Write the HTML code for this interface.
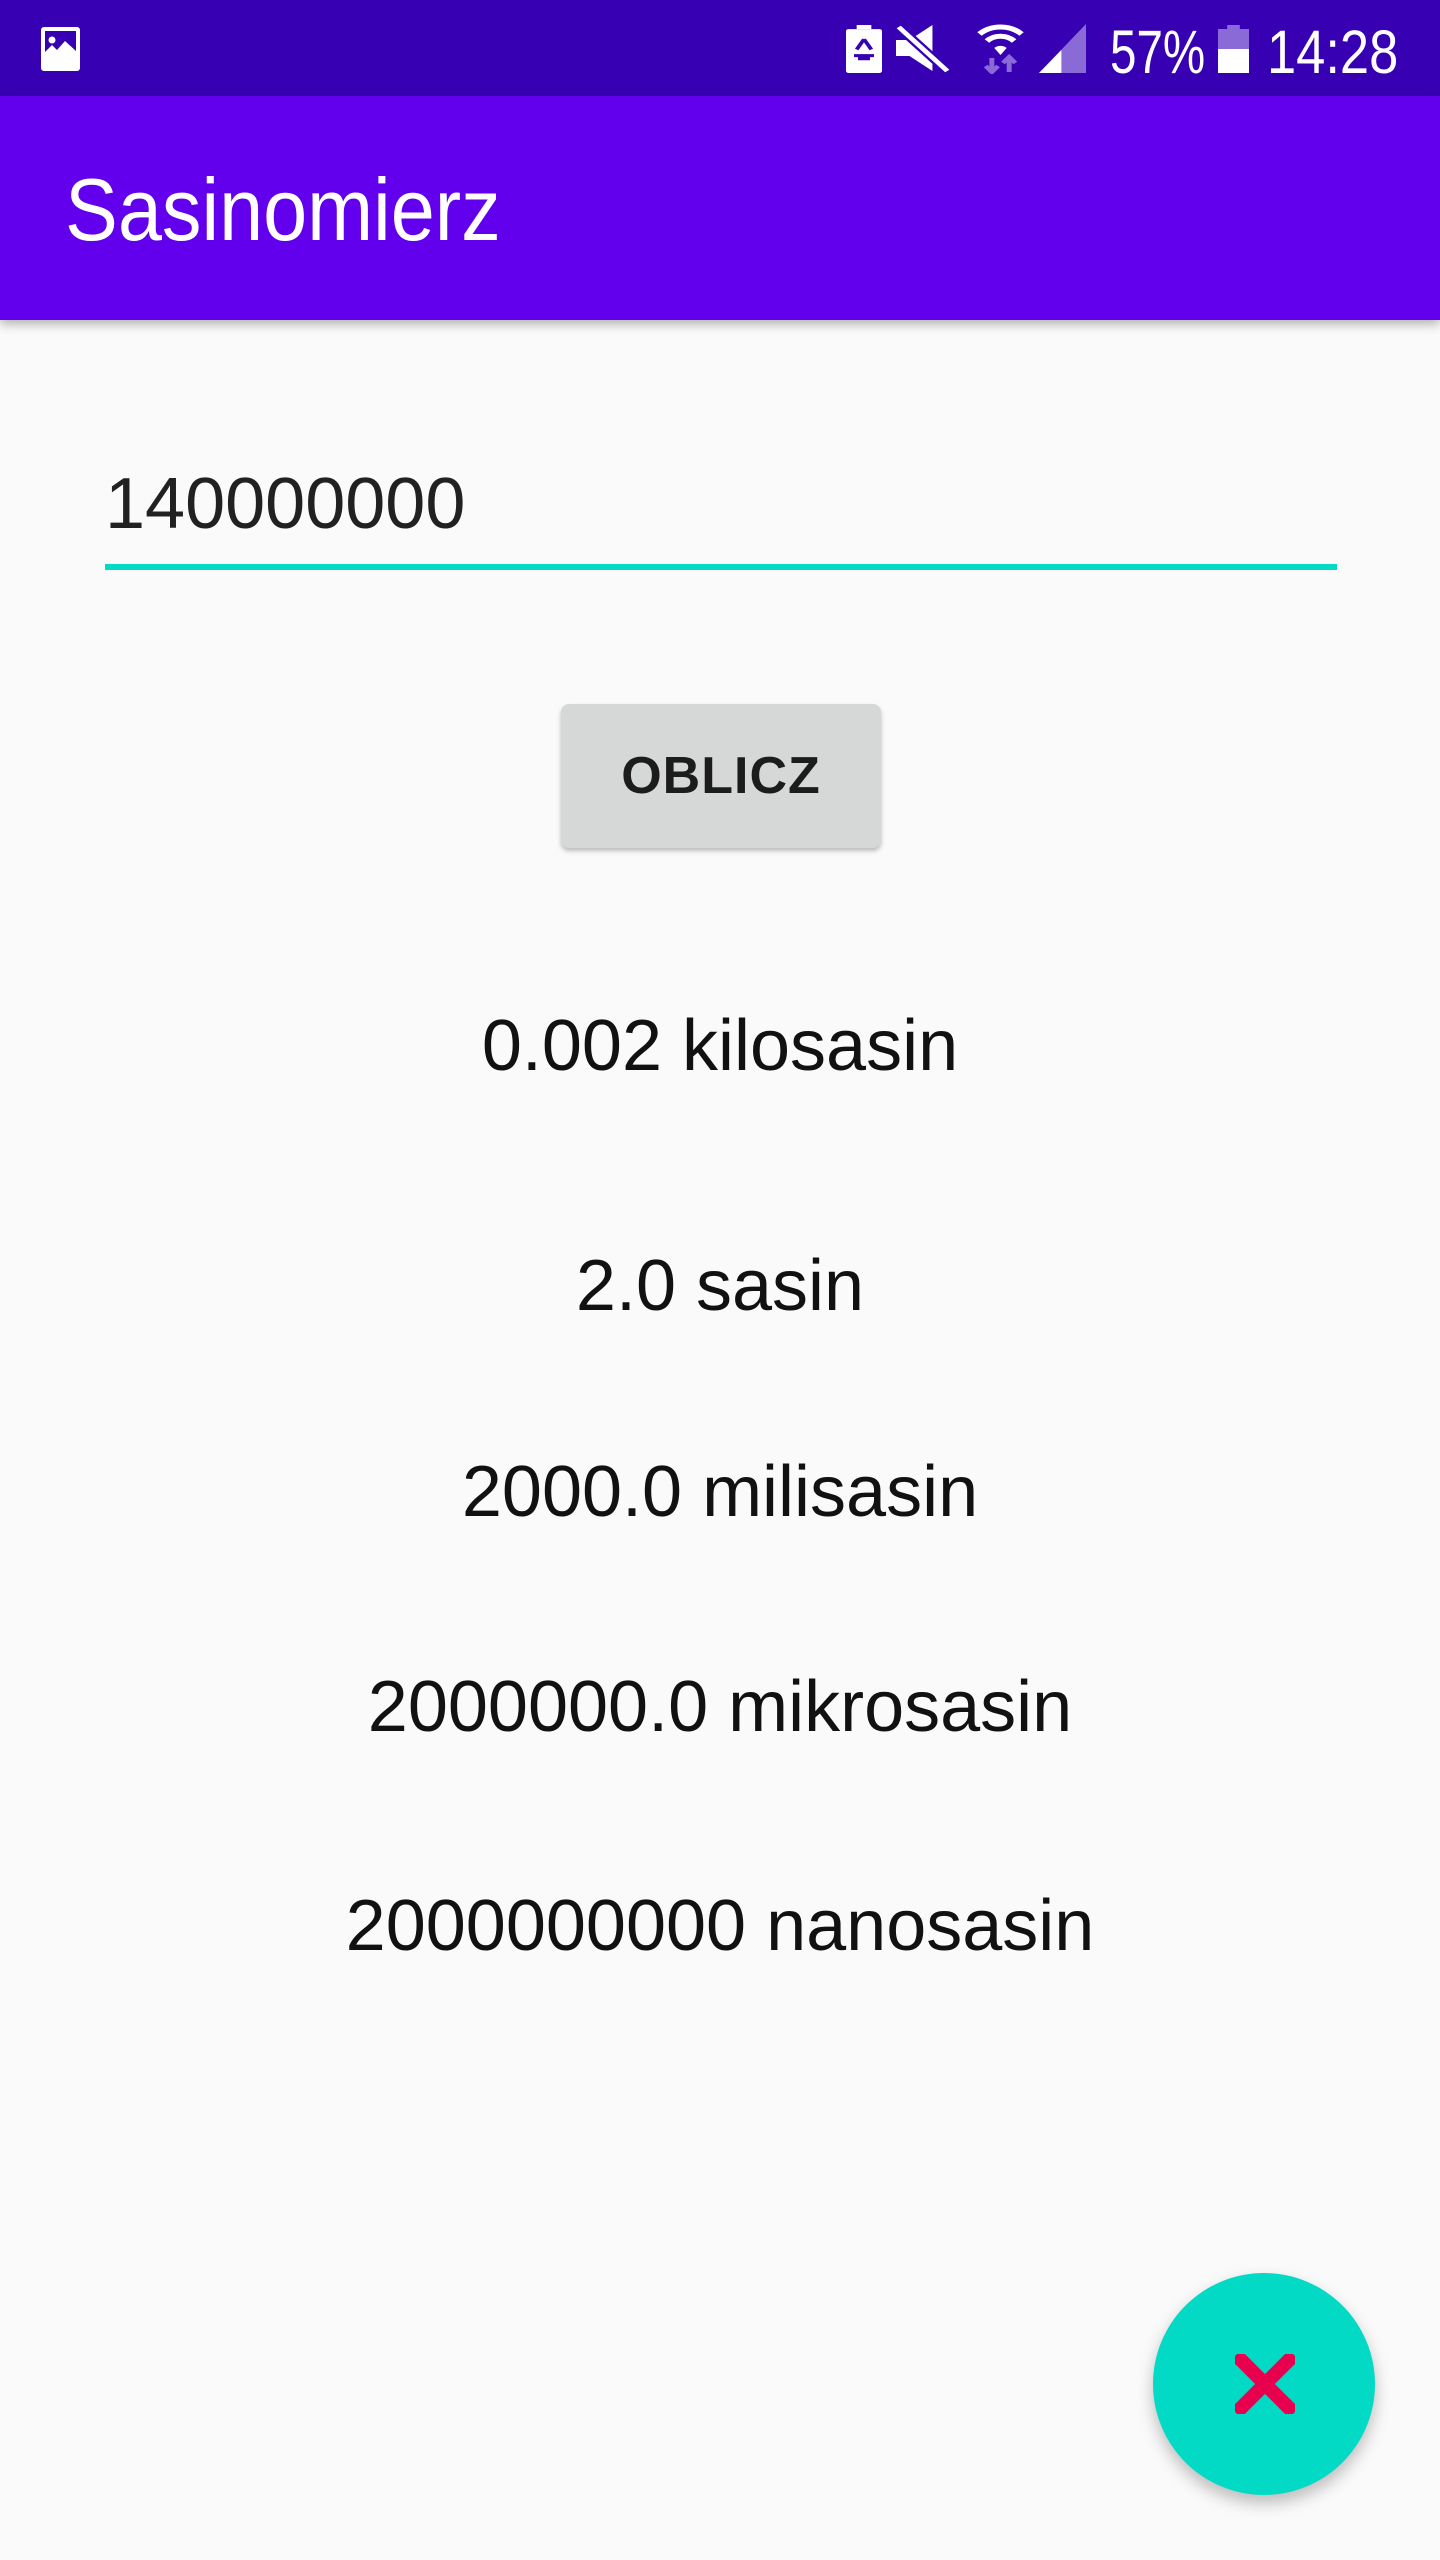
<!DOCTYPE html>
<html><head><meta charset="utf-8"><style>
*{margin:0;padding:0;box-sizing:border-box}
body{width:1440px;height:2560px;background:#fafafa;font-family:"Liberation Sans",sans-serif;position:relative;overflow:hidden}
.sb{position:absolute;left:0;top:0;width:1440px;height:96px;background:#3700b3}
.ab{position:absolute;left:0;top:96px;width:1440px;height:224px;background:#6200ee;box-shadow:0 4px 10px rgba(0,0,0,.3)}
.title{position:absolute;left:65px;top:166px;color:#fff;font-size:88px;line-height:1;transform:scaleX(.9);transform-origin:left}
.st{position:absolute;color:#fff;font-size:61px;line-height:1;top:22px;transform-origin:left}
.input{position:absolute;left:105px;top:468px;font-size:72px;color:#212121;line-height:1}
.line{position:absolute;left:105px;top:564px;width:1232px;height:6px;background:#03dac5}
.btn{position:absolute;left:561px;top:704px;width:320px;height:144px;background:#d6d7d7;border-radius:8px;box-shadow:0 3px 5px rgba(0,0,0,.25);font-weight:bold;font-size:52px;letter-spacing:1px;color:#1c1c1c;text-align:center;line-height:144px}
.r{position:absolute;left:0;width:1440px;text-align:center;font-size:72px;color:#111;line-height:1}
.fab{position:absolute;left:1153px;top:2273px;width:222px;height:222px;border-radius:50%;background:#03dac5;box-shadow:0 8px 16px rgba(0,0,0,.25)}
</style></head><body>
<div class="sb"></div>
<svg style="position:absolute;left:36px;top:26px" width="49" height="46" viewBox="0 0 41 46"><rect x="1" y="1" width="39" height="44" rx="3" fill="#fff"/><rect x="5" y="5" width="31" height="29" fill="#3700b3"/><circle cx="12" cy="14" r="3.5" fill="#fff"/><path d="M5 34 L5 26 L12 19 L17 24 L25 15 L36 25 L36 34Z" fill="#fff"/></svg>
<svg style="position:absolute;left:846px;top:25px" width="36" height="48" viewBox="0 0 27 47" preserveAspectRatio="none"><rect x="8" y="0" width="11" height="4" fill="#fff"/><rect x="0" y="4" width="27" height="43" rx="2" fill="#fff"/><path d="M13.5 14 L8 24 M13.5 14 L19 24 M6 30 L21 30 M9 33 L18 33" stroke="#3700b3" stroke-width="3" fill="none"/></svg>
<svg style="position:absolute;left:896px;top:25px" width="54" height="48" viewBox="0 0 40 48" preserveAspectRatio="none"><path d="M0 15 H10 L27 0 V46 L10 31 H0Z" fill="#fff"/><path d="M2 2 L38 46" stroke="#3700b3" stroke-width="8"/><path d="M2 2 L38 46" stroke="#fff" stroke-width="4"/></svg>
<svg style="position:absolute;left:977px;top:24px" width="47" height="50" viewBox="0 0 38 50" preserveAspectRatio="none"><path d="M2 10 A24 24 0 0 1 36 10" stroke="#fff" stroke-width="5" fill="none"/><path d="M8 17 A15 15 0 0 1 30 17" stroke="#fff" stroke-width="5" fill="none"/><path d="M14 24 A7 7 0 0 1 24 24 L19 31Z" fill="#fff"/><path d="M12 34 V46 M7 42 L12 48 L17 42 M26 48 V36 M21 39 L26 33 L31 39" stroke="#8a6ad6" stroke-width="4" fill="none"/></svg>
<svg style="position:absolute;left:1039px;top:24px" width="47" height="49" viewBox="0 0 42 49" preserveAspectRatio="none"><path d="M0 49 L42 0 V49Z" fill="#8a6ad6"/><path d="M0 49 L20 26 V49Z" fill="#fff"/></svg>
<div class="st" style="left:1110px;transform:scaleX(.78)">57%</div>
<svg style="position:absolute;left:1218px;top:25px" width="31" height="48" viewBox="0 0 27 48" preserveAspectRatio="none"><rect x="8" y="0" width="11" height="4" fill="#8a6ad6"/><rect x="0" y="4" width="27" height="20" fill="#8a6ad6"/><rect x="0" y="24" width="27" height="24" fill="#fff"/></svg>
<div class="st" style="left:1267px;transform:scaleX(.86)">14:28</div>
<div class="ab"></div>
<div class="title">Sasinomierz</div>
<div class="input">140000000</div>
<div class="line"></div>
<div class="btn">OBLICZ</div>
<div class="r" style="top:1010px">0.002 kilosasin</div>
<div class="r" style="top:1250px">2.0 sasin</div>
<div class="r" style="top:1456px">2000.0 milisasin</div>
<div class="r" style="top:1671px">2000000.0 mikrosasin</div>
<div class="r" style="top:1890px">2000000000 nanosasin</div>
<div class="fab"><svg style="position:absolute;left:82px;top:81px" width="60" height="60" viewBox="0 0 60 60"><path d="M6 6 L54 54 M54 6 L6 54" stroke="#e8004f" stroke-width="14" stroke-linecap="square"/></svg></div>
</body></html>
